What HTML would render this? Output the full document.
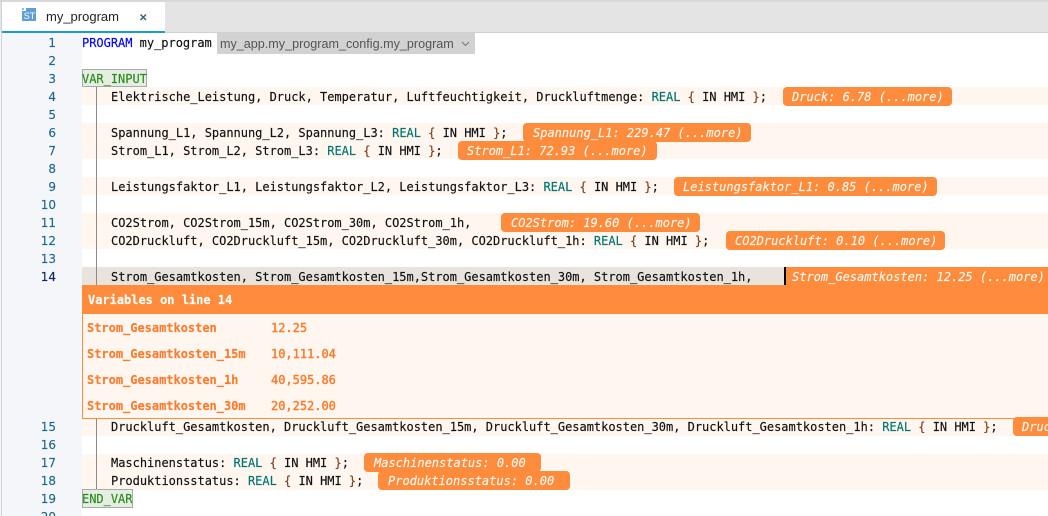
<!DOCTYPE html>
<html><head><meta charset="utf-8">
<style>
html,body{margin:0;padding:0;background:#fff}
#r{position:relative;width:1048px;height:516px;overflow:hidden;background:#fff;font-family:"DejaVu Sans Mono",monospace;font-size:12px;color:#111;letter-spacing:-0.017px;-webkit-text-stroke:0.15px currentColor}
#r div,#r span.a{position:absolute;white-space:pre}
.hl{left:82px;width:966px;height:18px;background:#fff6f0}
.n{left:30px;width:26px;text-align:right;height:18px;line-height:18px;color:#1f6a8c;font-family:"DejaVu Sans",sans-serif;font-size:12px}
.l{left:82px;height:18px;line-height:18px}
.t{left:111px;height:18px;line-height:18px}
.k{color:#00756f}.b{color:#7a3e1d}
.h{height:19px;line-height:20px;background:#ff8c3c;border-radius:4px;color:#fff6ee;font-style:italic;padding-left:9px;box-sizing:border-box;letter-spacing:0}
.nm{left:87px;height:18px;line-height:18px;color:#ff7b2c;font-weight:bold}
.v{left:271px;height:18px;line-height:18px;color:#ff7b2c;-webkit-text-stroke:0.4px #ff7b2c}
</style></head><body>
<div id="r">
<div style="left:0;top:0;width:1048px;height:33px;background:#e4e4e4"></div>
<div style="left:0;top:0;width:1048px;height:2px;background:#d8d8d8"></div>
<div style="left:2px;top:2px;width:163px;height:29px;background:#fff"></div>
<div style="left:2px;top:31px;width:163px;height:2px;background:#1c9ad6"></div>
<div style="left:165px;top:32px;width:883px;height:1px;background:#d0d0d0"></div>
<div style="left:22px;top:11px;width:14px;height:10px;background:#5f9fd6"></div>
<div style="left:26px;top:8px;width:10px;height:3px;background:#5f9fd6"></div>
<div style="left:22px;top:8px;width:2px;height:2px;background:#8fbce0"></div>
<div style="left:23px;top:11px;width:13px;height:11px;line-height:11px;font-family:'Liberation Sans',sans-serif;font-size:9px;color:#fff;text-align:center;-webkit-text-stroke:0">ST</div>
<div style="left:46px;top:8px;height:18px;line-height:18px;font-family:'Liberation Sans',sans-serif;font-size:13px;color:#222;letter-spacing:0;-webkit-text-stroke:0">my_program</div>
<svg style="position:absolute;left:139px;top:13px" width="9" height="9"><path d="M1.5 1.5L7 7M7 1.5L1.5 7" stroke="#2b5f80" stroke-width="1.4" fill="none"/></svg>

<div style="left:0;top:33px;width:82px;height:483px;background:#f4f6f9"></div>
<div style="left:1px;top:0;width:1px;height:516px;background:#cfd2d6"></div>

<div class="hl" style="top:87px"></div>
<div class="hl" style="top:123px;height:36px"></div>
<div class="hl" style="top:177px"></div>
<div class="hl" style="top:213px;height:36px"></div>
<div class="hl" style="top:267px;background:#e8e3dd"></div>
<div class="hl" style="top:418px"></div>
<div class="hl" style="top:454px;height:36px"></div>
<div style="left:96px;top:87px;width:1px;height:403px;background:#8a8a8a"></div>

<div class="n" style="top:34px">1</div>
<div class="n" style="top:52px">2</div>
<div class="n" style="top:70px">3</div>
<div class="n" style="top:88px">4</div>
<div class="n" style="top:106px">5</div>
<div class="n" style="top:124px">6</div>
<div class="n" style="top:142px">7</div>
<div class="n" style="top:160px">8</div>
<div class="n" style="top:178px">9</div>
<div class="n" style="top:196px">10</div>
<div class="n" style="top:214px">11</div>
<div class="n" style="top:232px">12</div>
<div class="n" style="top:250px">13</div>
<div class="n" style="top:268px;color:#14285f">14</div>
<div class="n" style="top:418px">15</div>
<div class="n" style="top:436px">16</div>
<div class="n" style="top:454px">17</div>
<div class="n" style="top:472px">18</div>
<div class="n" style="top:490px">19</div>
<div class="n" style="top:508px">20</div>

<div class="l" style="top:34px"><span style="color:#0000ff">PROGRAM</span> my_program</div>
<div style="left:217px;top:33px;width:258px;height:21px;background:#d2d2d2"></div>
<div style="left:220px;top:34px;height:20px;line-height:20px;font-family:'Liberation Sans',sans-serif;font-size:12.6px;color:#555;letter-spacing:0;-webkit-text-stroke:0">my_app.my_program_config.my_program</div>
<svg style="position:absolute;left:461px;top:41px" width="9" height="6"><path d="M1 1L4.5 4.5L8 1" stroke="#777" stroke-width="1" fill="none"/></svg>

<div style="left:82px;top:69px;width:65px;height:18px;background:#e4efe2;border:1px solid #aaa;box-sizing:border-box"></div>
<div class="l" style="top:70px;color:#2a8a1e">VAR_INPUT</div>
<div class="t" style="top:88px">Elektrische_Leistung, Druck, Temperatur, Luftfeuchtigkeit, Druckluftmenge: <span class="k">REAL</span> <span class="b">{</span> IN HMI <span class="b">}</span>;</div>
<div class="h" style="left:783px;top:87px;width:169px">Druck: 6.78 (...more)</div>
<div class="t" style="top:124px">Spannung_L1, Spannung_L2, Spannung_L3: <span class="k">REAL</span> <span class="b">{</span> IN HMI <span class="b">}</span>;</div>
<div class="h" style="left:523px;top:123px;width:228px;padding-left:10px">Spannung_L1: 229.47 (...more)</div>
<div class="t" style="top:142px">Strom_L1, Strom_L2, Strom_L3: <span class="k">REAL</span> <span class="b">{</span> IN HMI <span class="b">}</span>;</div>
<div class="h" style="left:458px;top:141px;width:199px">Strom_L1: 72.93 (...more)</div>
<div class="t" style="top:178px">Leistungsfaktor_L1, Leistungsfaktor_L2, Leistungsfaktor_L3: <span class="k">REAL</span> <span class="b">{</span> IN HMI <span class="b">}</span>;</div>
<div class="h" style="left:674px;top:177px;width:263px">Leistungsfaktor_L1: 0.85 (...more)</div>
<div class="t" style="top:214px">CO2Strom, CO2Strom_15m, CO2Strom_30m, CO2Strom_1h,</div>
<div class="h" style="left:501px;top:213px;width:199px;padding-left:10px">CO2Strom: 19.60 (...more)</div>
<div class="t" style="top:232px">CO2Druckluft, CO2Druckluft_15m, CO2Druckluft_30m, CO2Druckluft_1h: <span class="k">REAL</span> <span class="b">{</span> IN HMI <span class="b">}</span>;</div>
<div class="h" style="left:726px;top:231px;width:219px">CO2Druckluft: 0.10 (...more)</div>
<div class="t" style="top:268px">Strom_Gesamtkosten, Strom_Gesamtkosten_15m,Strom_Gesamtkosten_30m, Strom_Gesamtkosten_1h,</div>
<div class="h" style="left:786px;top:267px;width:262px;height:18px;border-radius:0;padding-left:6px">Strom_Gesamtkosten: 12.25 (...more)</div>
<div style="left:784px;top:267px;width:2px;height:18px;background:#000"></div>

<div style="left:82px;top:285px;width:966px;height:134px;background:#fff6f0;border-left:1px solid #ff8c3c;border-bottom:1px solid #ff8c3c;box-sizing:border-box"></div>
<div style="left:82px;top:285px;width:966px;height:29px;background:#ff8c3c"></div>
<div style="left:88px;top:291px;height:18px;line-height:18px;color:#fff;font-weight:bold">Variables on line 14</div>
<div class="nm" style="top:319px">Strom_Gesamtkosten</div><div class="v" style="top:319px">12.25</div>
<div class="nm" style="top:345px">Strom_Gesamtkosten_15m</div><div class="v" style="top:345px">10,111.04</div>
<div class="nm" style="top:371px">Strom_Gesamtkosten_1h</div><div class="v" style="top:371px">40,595.86</div>
<div class="nm" style="top:397px">Strom_Gesamtkosten_30m</div><div class="v" style="top:397px">20,252.00</div>

<div class="t" style="top:418px">Druckluft_Gesamtkosten, Druckluft_Gesamtkosten_15m, Druckluft_Gesamtkosten_30m, Druckluft_Gesamtkosten_1h: <span class="k">REAL</span> <span class="b">{</span> IN HMI <span class="b">}</span>;</div>
<div class="h" style="left:1013px;top:417px;width:60px">Druck</div>
<div class="t" style="top:454px">Maschinenstatus: <span class="k">REAL</span> <span class="b">{</span> IN HMI <span class="b">}</span>;</div>
<div class="h" style="left:364px;top:453px;width:177px;padding-left:10px">Maschinenstatus: 0.00</div>
<div class="t" style="top:472px">Produktionsstatus: <span class="k">REAL</span> <span class="b">{</span> IN HMI <span class="b">}</span>;</div>
<div class="h" style="left:378px;top:471px;width:192px;padding-left:10px">Produktionsstatus: 0.00</div>
<div style="left:82px;top:489px;width:51px;height:19px;background:#e4efe2;border:1px solid #aaa;box-sizing:border-box"></div>
<div class="l" style="top:490px;color:#2a8a1e">END_VAR</div>
</div>
</body></html>
